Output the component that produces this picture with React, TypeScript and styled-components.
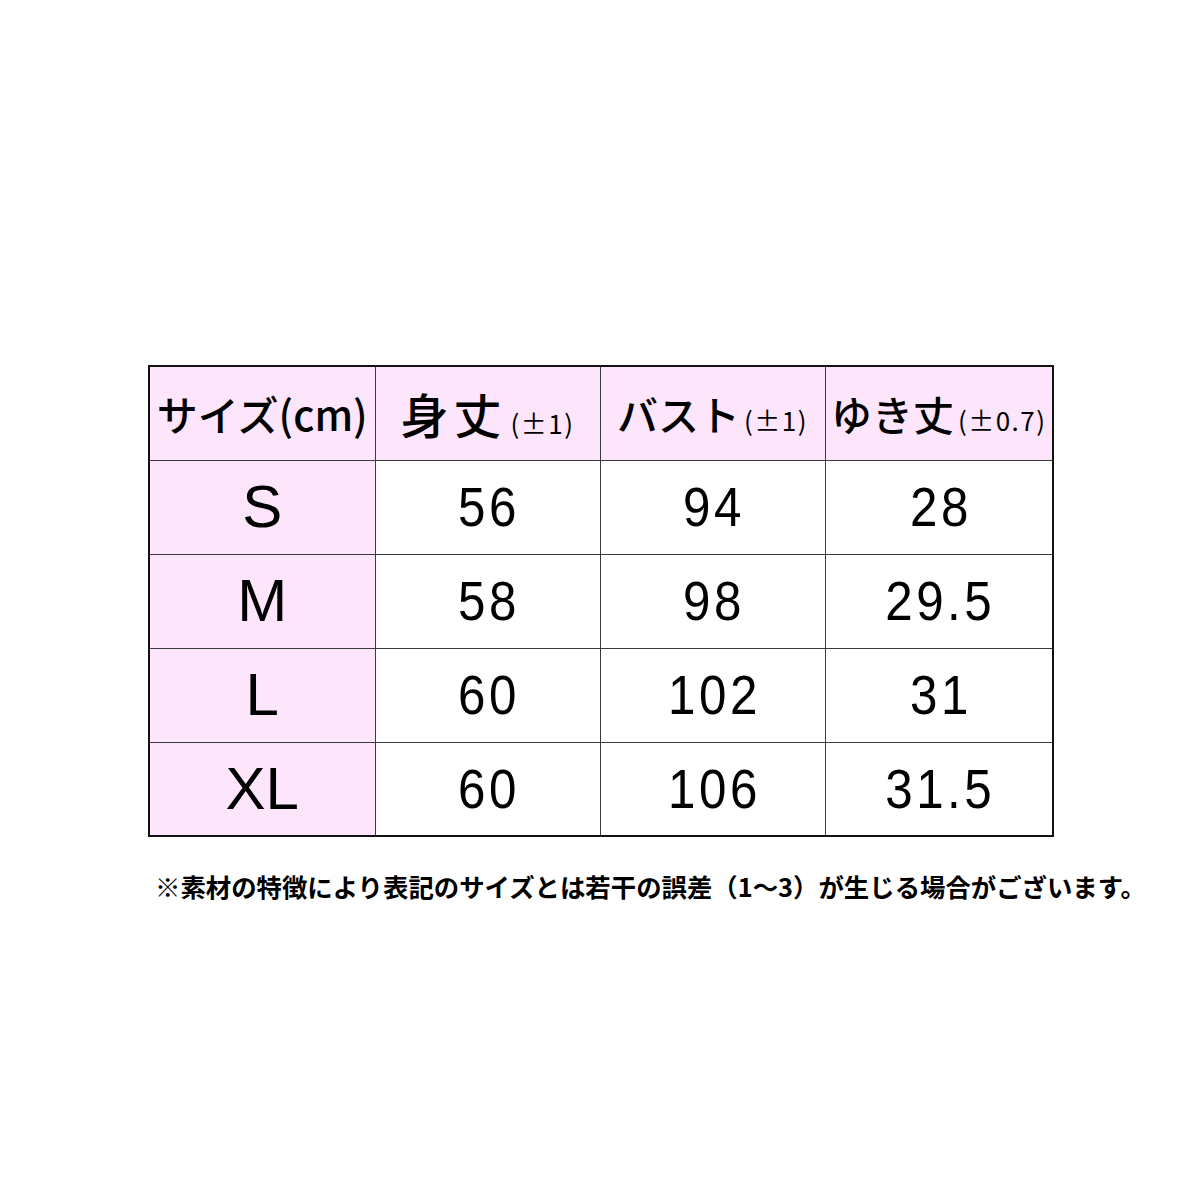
import React from "react";
import styled, { createGlobalStyle } from "styled-components";

const GlobalStyle = createGlobalStyle`
  html, body {
    margin: 0;
    padding: 0;
    background: #fff;
  }
  body {
    font-family: "Liberation Sans", "Noto Sans CJK JP", sans-serif;
    color: #000;
  }
`;

const Page = styled.div`
  width: 1200px;
  height: 1200px;
  box-sizing: border-box;
  padding: 365px 0 0 148px;
`;

const Table = styled.table`
  border-collapse: collapse;
  table-layout: fixed;
  width: 904px;
  border: 2px solid #111;
`;

const Row = styled.tr`
  height: 94px;
`;

const Cell = styled.td<{ $pink?: boolean }>`
  border: 1px solid #3a3a3a;
  background: ${(p) => (p.$pink ? "#fde5fb" : "#fff")};
  text-align: center;
  vertical-align: middle;
  padding: 0;
  white-space: nowrap;
`;

const HeadCell = styled(Cell).attrs({ as: "th" })`
  font-family: "Noto Sans CJK JP", sans-serif;
  font-weight: 500;
  line-height: 1;
`;

const HeadMain = styled.span<{ $size: number; $spacing?: number }>`
  font-size: ${(p) => p.$size}px;
  letter-spacing: ${(p) => p.$spacing ?? 0}px;
`;

const HeadNote = styled.span`
  font-size: 26px;
  font-weight: 400;
  letter-spacing: 1.5px;
  margin-left: 4px;
`;

const SizeLabel = styled.span`
  font-size: 60px;
  line-height: 1;
`;

const Value = styled.span`
  display: inline-block;
  font-size: 56px;
  line-height: 1;
  letter-spacing: 4px;
  padding-left: 4px;
  transform: scaleX(0.88);
`;

const Note = styled.p`
  margin: 34px 0 0 7px;
  font-family: "Noto Sans CJK JP", sans-serif;
  font-weight: 700;
  font-size: 25.4px;
  line-height: 1.2;
  white-space: nowrap;
`;

const rows = [
  { size: "S", length: "56", bust: "94", sleeve: "28" },
  { size: "M", length: "58", bust: "98", sleeve: "29.5" },
  { size: "L", length: "60", bust: "102", sleeve: "31" },
  { size: "XL", length: "60", bust: "106", sleeve: "31.5" },
];

const App: React.FC = () => {
  return (
    <Page>
      <GlobalStyle />
      <Table>
        <colgroup>
          <col style={{ width: 226 }} />
          <col style={{ width: 225 }} />
          <col style={{ width: 225 }} />
          <col style={{ width: 228 }} />
        </colgroup>
        <thead>
          <Row>
            <HeadCell $pink>
              <HeadMain $size={41}>サイズ(cm)</HeadMain>
            </HeadCell>
            <HeadCell $pink>
              <HeadMain $size={48} $spacing={5}>身丈</HeadMain>
              <HeadNote>(±1)</HeadNote>
            </HeadCell>
            <HeadCell $pink>
              <HeadMain $size={41}>バスト</HeadMain>
              <HeadNote>(±1)</HeadNote>
            </HeadCell>
            <HeadCell $pink>
              <HeadMain $size={41}>ゆき丈</HeadMain>
              <HeadNote>(±0.7)</HeadNote>
            </HeadCell>
          </Row>
        </thead>
        <tbody>
          {rows.map((r) => (
            <Row key={r.size}>
              <Cell $pink>
                <SizeLabel>{r.size}</SizeLabel>
              </Cell>
              <Cell>
                <Value>{r.length}</Value>
              </Cell>
              <Cell>
                <Value>{r.bust}</Value>
              </Cell>
              <Cell>
                <Value>{r.sleeve}</Value>
              </Cell>
            </Row>
          ))}
        </tbody>
      </Table>
      <Note>※素材の特徴により表記のサイズとは若干の誤差（1～3）が生じる場合がございます。</Note>
    </Page>
  );
};

export default App;
